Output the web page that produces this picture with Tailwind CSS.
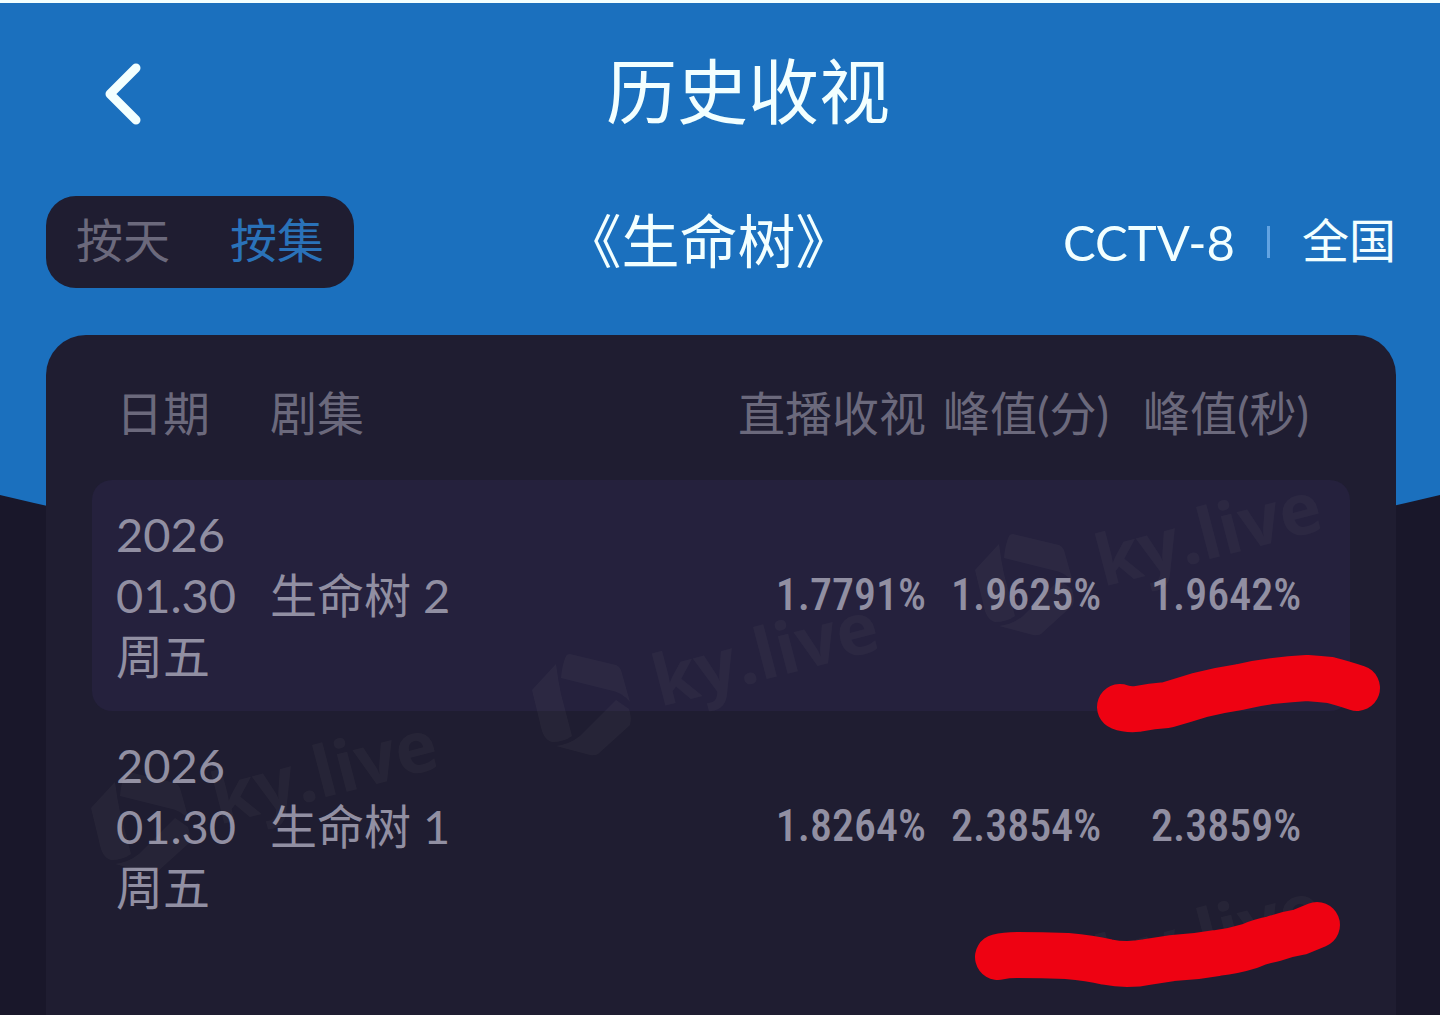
<!DOCTYPE html>
<html lang="zh-CN">
<head>
    <meta charset="UTF-8">
    <meta name="viewport" content="width=device-width, initial-scale=1.0">
    <title>历史收视</title>
    <script src="https://cdn.jsdelivr.net/npm/@tailwindcss/browser@4"></script>
</head>
<body class="relative min-h-screen flex flex-col overflow-x-hidden border-t-[3px] border-[#f2ffff] bg-[#19172a] font-['Lato','Noto_Sans_CJK_SC',sans-serif] text-[47px] leading-[61px] text-[#f2ffff]">
    <!-- Curved backdrop -->
    <svg class="absolute inset-x-0 top-0 w-full h-[600px]" viewBox="0 0 1440 600" preserveAspectRatio="none" aria-hidden="true">
        <path d="M0 0H1440V492Q720 665 0 492Z" fill="#1b70be"/>
    </svg>

    <header class="relative flex items-center px-24 pt-[42px]">
        <button type="button" aria-label="返回" class="w-14 h-24 flex items-center justify-center">
            <svg class="w-14 h-20" viewBox="0 0 56 80" fill="none" stroke="currentColor" stroke-width="9" stroke-linecap="round" stroke-linejoin="round">
                <path d="M40 15L14 41L40 67"/>
            </svg>
        </button>
        <h1 class="flex-1 pb-1 text-center text-[71px] leading-[92px]">历史收视</h1>
    </header>

    <div class="relative flex items-center justify-between pl-[46px] pr-11 pt-[55px]">
        <div class="flex h-[92px] rounded-[30px] bg-[#1f1d31]">
            <button type="button" class="w-[154px] pb-1 text-[#6b697c]">按天</button>
            <button type="button" class="w-[154px] pb-1 text-[#2a72b9]">按集</button>
        </div>
        <h2 class="pb-1 text-[58px]">《生命树》</h2>
        <div class="flex items-center gap-8">
            <span class="text-[49px]">CCTV-8</span>
            <span class="w-[3px] h-8 bg-[#62a3e2]"></span>
            <span class="pb-1">全国</span>
        </div>
    </div>

    <main class="relative flex-1 ml-[46px] mr-11 mt-[47px] px-[46px] pt-12 rounded-t-[40px] bg-[#1f1d31] overflow-hidden">
        <table class="w-full table-fixed border-separate border-spacing-0">
            <thead class="text-[#6b697c]">
                <tr>
                    <th scope="col" class="w-[178px] pl-6 pb-9 text-left font-normal">日期</th>
                    <th scope="col" class="pb-9 text-left font-normal">剧集</th>
                    <th scope="col" class="w-[200px] pb-9 text-right font-normal whitespace-nowrap">直播收视</th>
                    <th scope="col" class="w-[200px] pb-9 text-center font-normal whitespace-nowrap">峰值(分)</th>
                    <th scope="col" class="w-[224px] pr-6 pb-9 text-center font-normal whitespace-nowrap">峰值(秒)</th>
                </tr>
            </thead>
            <tbody class="text-[#918fa2]">
                <tr>
                    <td class="pl-6 py-6 rounded-l-[20px] bg-[#25213d]">2026<br>01.30<br>周五</td>
                    <td class="bg-[#25213d]">生命树 2</td>
                    <td class="bg-[#25213d] text-right font-['Roboto_Condensed','Roboto',sans-serif] text-[44px] font-medium">1.7791%</td>
                    <td class="bg-[#25213d] text-center font-['Roboto_Condensed','Roboto',sans-serif] text-[44px] font-medium">1.9625%</td>
                    <td class="pr-6 rounded-r-[20px] bg-[#25213d] text-center font-['Roboto_Condensed','Roboto',sans-serif] text-[44px] font-medium">1.9642%</td>
                </tr>
                <tr>
                    <td class="pl-6 py-6">2026<br>01.30<br>周五</td>
                    <td>生命树 1</td>
                    <td class="text-right font-['Roboto_Condensed','Roboto',sans-serif] text-[44px] font-medium">1.8264%</td>
                    <td class="text-center font-['Roboto_Condensed','Roboto',sans-serif] text-[44px] font-medium">2.3854%</td>
                    <td class="pr-6 text-center font-['Roboto_Condensed','Roboto',sans-serif] text-[44px] font-medium">2.3859%</td>
                </tr>
            </tbody>
        </table>

        <!-- Watermarks -->
        <svg class="absolute left-0 top-0 w-[1350px] h-[615px] pointer-events-none" viewBox="46 335 1350 615" aria-hidden="true">
            <defs>
                <g id="mark" fill="#ffffe0" fill-opacity="0.035">
                    <path d="M570 654L616 665Q619 666 621 670L630 702Q622 692 609 690L561 678Q562 665 566 656Q567 654 570 654Z"/>
                    <path d="M556 664L532 690L540 723Q543 740 552 742Q564 742 572 736L561 694Q558 680 556 664Z"/>
                    <path d="M616 700L629 709Q632 718 630 725L598 754Q595 756 590 755L556 746Q570 744 580 736Z"/>
                    <text transform="translate(660 707) rotate(-14.6)" class="font-['Open_Sans',sans-serif] font-bold text-[71px]">ky.live</text>
                </g>
            </defs>
            <use href="#mark"/>
            <use href="#mark" x="443" y="-120"/>
            <use href="#mark" x="-441" y="118"/>
            <use href="#mark" x="443" y="281"/>
        </svg>
    </main>

    <!-- Red marker strokes -->
    <svg class="absolute right-0 top-[637px] w-[480px] h-[375px] pointer-events-none" viewBox="960 640 480 375" fill="none" stroke="#ee0212" stroke-width="46" stroke-linecap="round" stroke-linejoin="round" aria-hidden="true">
        <path d="M1120 707Q1128 710 1137 709Q1152 706 1167 705Q1184 700 1200 695Q1220 690 1240 687Q1256 683 1273 681Q1290 679 1307 678Q1320 679 1330 680Q1342 683 1357 688"/>
        <path d="M998 957Q1006 955 1017 955Q1042 955 1067 956Q1090 958 1107 962Q1117 964 1127 964Q1138 964 1147 962Q1160 960 1173 958Q1195 957 1217 953Q1234 951 1250 946Q1261 941 1273 939Q1287 934 1300 932L1317 925"/>
    </svg>
</body>
</html>
